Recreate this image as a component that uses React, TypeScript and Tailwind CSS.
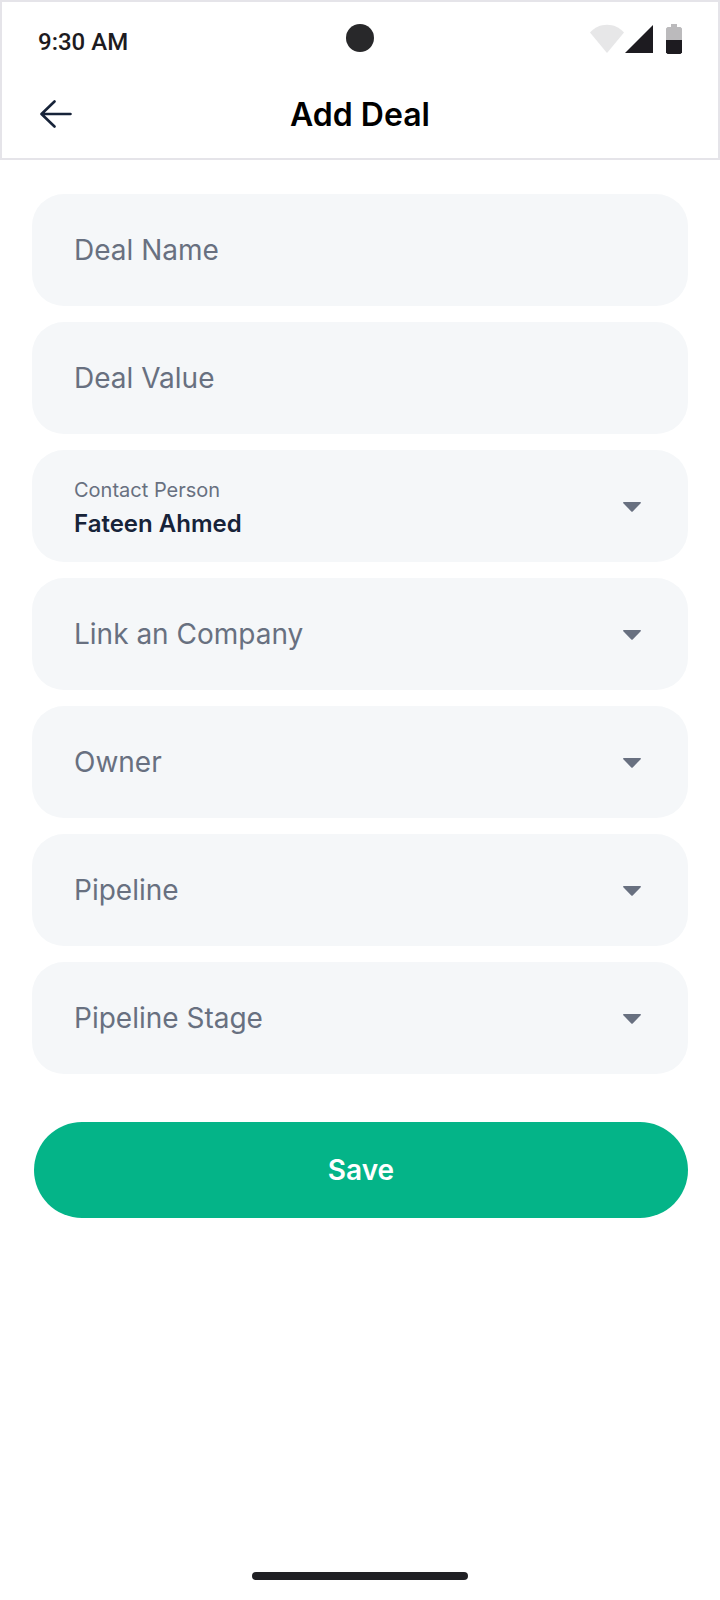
import { useState } from "react";

const textFields = ["Deal Name", "Deal Value"];

const pickers: { label: string; options: string[] }[] = [
  { label: "Link an Company", options: [] },
  { label: "Owner", options: [] },
  { label: "Pipeline", options: [] },
  { label: "Pipeline Stage", options: [] },
];

function StatusBar() {
  return (
    <div className="grid grid-cols-3 items-start px-9 pt-[22px]">
      <span className="font-[Roboto,sans-serif] text-2xl leading-9 font-medium text-[#1d1b20]">
        9:30 AM
      </span>
      <span className="size-7 justify-self-center rounded-full bg-[#28282a]" />
      <div className="flex items-start justify-self-end">
        <svg width="64" height="30" viewBox="0 0 64 30" aria-hidden="true">
          <path d="M0 8.5C4.5 3.5 10.5 .8 17 .8S29.500 3.500 34 8.500L17 29Z" fill="#e7e7e8" />
          <path d="M63 1V29H35Z" fill="#1d1b20" />
        </svg>
        <svg className="ml-3" width="16" height="30" viewBox="0 0 16 30" aria-hidden="true">
          <path d="M5 0h6v3h3.500L16 4.500V16H0V4.500L1.500 3H5Z" fill="#bbbabc" />
          <path d="M0 16h16v12.500L14.500 30h-13L0 28.500Z" fill="#1d1b20" />
        </svg>
      </div>
    </div>
  );
}

function Caret() {
  return (
    <svg
      className="pointer-events-none shrink-0"
      width="18"
      height="12"
      viewBox="0 0 18 12"
      aria-hidden="true"
    >
      <path
        d="M.8 2H17.200C17.900 2 18.200 2.700 17.700 3.200L9.700 11.400C9.300 11.800 8.700 11.800 8.300 11.400L.3 3.200C-.2 2.700.1 2 .8 2Z"
        fill="#687080"
      />
    </svg>
  );
}

function Picker({ label, options }: { label: string; options: string[] }) {
  return (
    <div className="grid h-28 items-center rounded-[32px] bg-[#f5f7f9]">
      <select
        aria-label={label}
        defaultValue=""
        className="col-start-1 row-start-1 h-full w-full appearance-none rounded-[32px] bg-transparent pr-20 pl-[42px] text-[28px] text-[#687080]"
      >
        <option value="">{label}</option>
        {options.map((option) => (
          <option key={option}>{option}</option>
        ))}
      </select>
      <div className="pointer-events-none col-start-1 row-start-1 mr-[47px] justify-self-end">
        <Caret />
      </div>
    </div>
  );
}

export default function App() {
  const [values, setValues] = useState<Record<string, string>>({});

  return (
    <div className="flex min-h-screen flex-col bg-white font-[Inter,sans-serif]">
      <header className="h-40 border-2 border-[#e5e4e9]">
        <StatusBar />
        <div className="mt-[30px] grid grid-cols-[48px_1fr_48px] items-center px-[30px]">
          <button type="button" aria-label="Back" className="flex size-12 items-center justify-center">
            <svg width="32" height="28" viewBox="0 0 32 28" fill="none" aria-hidden="true">
              <path
                d="M14.500 1.500L1.500 14L14.500 26.500M2 14H30.500"
                stroke="#172339"
                strokeWidth="2.600"
                strokeLinecap="round"
                strokeLinejoin="round"
              />
            </svg>
          </button>
          <h1 className="pt-0.5 text-center text-[32px] leading-10 font-semibold text-black">
            Add Deal
          </h1>
        </div>
      </header>

      <form
        className="flex flex-col gap-4 px-8 pt-[34px]"
        onSubmit={(event) => event.preventDefault()}
      >
        {textFields.map((name) => (
          <input
            key={name}
            type="text"
            aria-label={name}
            placeholder={name}
            value={values[name] ?? ""}
            onChange={(event) => setValues({ ...values, [name]: event.target.value })}
            className="h-28 w-full rounded-[32px] bg-[#f5f7f9] px-[42px] text-[28px] text-[#172339] placeholder:text-[#687080]"
          />
        ))}

        <div className="flex h-28 items-center justify-between rounded-[32px] bg-[#f5f7f9] pr-[47px] pl-[42px]">
          <div className="flex flex-1 flex-col pt-1">
            <label htmlFor="contact" className="text-xl leading-8 text-[#687080]">
              Contact Person
            </label>
            <select
              id="contact"
              className="w-full appearance-none bg-transparent text-2xl leading-9 font-semibold text-[#172339]"
            >
              <option>Fateen Ahmed</option>
            </select>
          </div>
          <Caret />
        </div>

        {pickers.map((picker) => (
          <Picker key={picker.label} {...picker} />
        ))}

        <div className="pt-8 pl-0.5">
          <button
            type="submit"
            className="h-24 w-full rounded-full bg-[#04b488] text-[28px] font-semibold text-white"
          >
            Save
          </button>
        </div>
      </form>

      <div className="mt-auto flex justify-center pb-5">
        <div className="h-2 w-[30%] rounded-full bg-[#202024]" />
      </div>
    </div>
  );
}
